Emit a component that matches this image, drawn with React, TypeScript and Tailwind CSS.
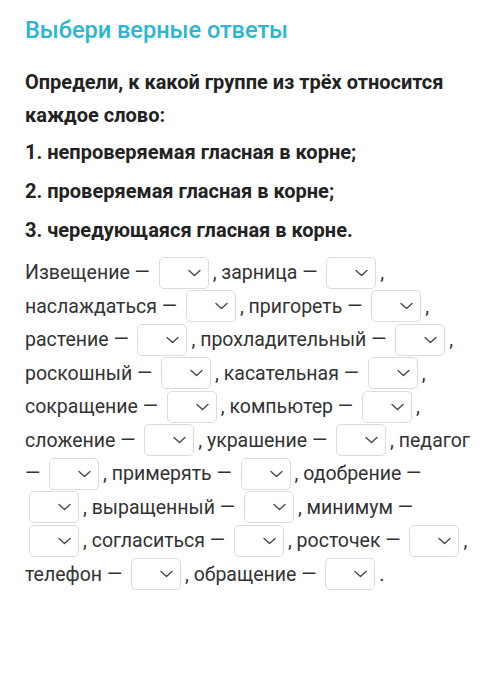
import React from "react";

const Dd = () => (
  <span className="mx-[4px] inline-flex h-[32px] w-[50px] shrink-0 items-center justify-end rounded-[5px] border border-[#dcdcdc] bg-white pr-[7px]">
    <svg width="13" height="8" viewBox="0 0 13 8" fill="none">
      <path d="M1 1.5 L6.5 6.5 L12 1.5" stroke="#4a4a4a" strokeWidth="1.4" strokeLinecap="round" strokeLinejoin="round" />
    </svg>
  </span>
);

type Part = string | 0;

const lines: Part[][] = [
  ["Извещение — ", 0, ", зарница — ", 0, ","],
  ["наслаждаться — ", 0, ", пригореть — ", 0, ","],
  ["растение — ", 0, ", прохладительный — ", 0, ","],
  ["роскошный — ", 0, ", касательная — ", 0, ","],
  ["сокращение — ", 0, ", компьютер — ", 0, ","],
  ["сложение — ", 0, ", украшение — ", 0, ", педагог"],
  ["— ", 0, ", примерять — ", 0, ", одобрение —"],
  ["", 0, ", выращенный — ", 0, ", минимум —"],
  ["", 0, ", согласиться — ", 0, ", росточек — ", 0, ","],
  ["телефон — ", 0, ", обращение — ", 0, "."],
];

export default function App() {
  return (
    <div className="min-h-screen bg-white px-[25px] pt-[15px] font-['Roboto',sans-serif]">
      <h1 className="text-[23.5px] leading-[30px] font-medium text-[#2bb5d6]">Выбери верные ответы</h1>
      <p className="mt-[21px] text-[20px] leading-[33px] font-bold text-[#222]">
        Определи, к какой группе из трёх относится каждое слово:
      </p>
      <div className="mt-[1px] text-[20px] leading-[39px] font-bold text-[#222]">
        <p>1. непроверяемая гласная в корне;</p>
        <p>2. проверяемая гласная в корне;</p>
        <p>3. чередующаяся гласная в корне.</p>
      </div>
      <div className="mt-[6px] text-[19.5px] text-[#333]">
        {lines.map((ln, i) => (
          <div key={i} className="flex h-[33.5px] items-center whitespace-pre">
            {ln.map((p, j) => (p === 0 ? <Dd key={j} /> : <span key={j}>{p}</span>))}
          </div>
        ))}
      </div>
    </div>
  );
}
